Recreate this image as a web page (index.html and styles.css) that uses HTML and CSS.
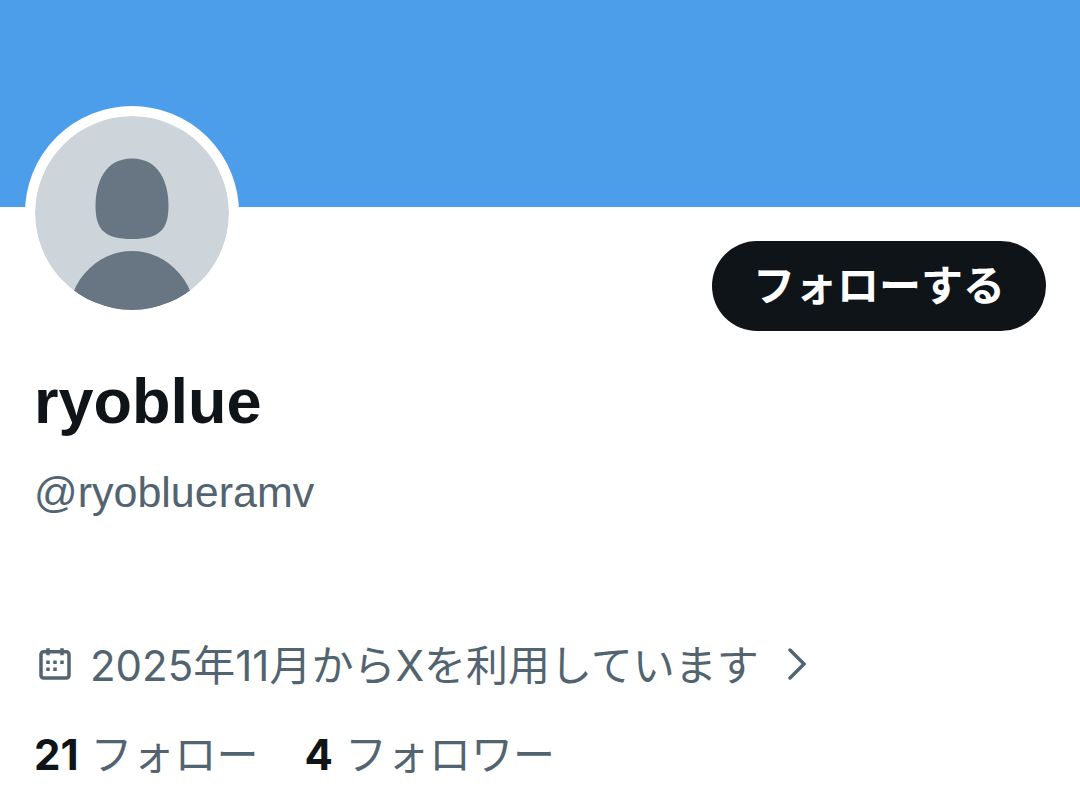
FILE: index.html
```html
<!DOCTYPE html>
<html lang="ja">
<head>
<meta charset="utf-8">
<meta name="viewport" content="width=device-width, initial-scale=1">
<title>ryoblue</title>
<link rel="stylesheet" href="styles.css">
</head>
<body>
<main class="profile">
  <div class="banner"></div>
  <section class="content">
    <div class="top">
      <svg class="avatar" viewBox="0 0 194 194" role="img" aria-label="ryoblue">
        <defs><clipPath id="round"><circle cx="97" cy="97" r="97"/></clipPath></defs>
        <g clip-path="url(#round)">
          <rect width="194" height="194" fill="#cdd5db"/>
          <path fill="#687683" d="M97 42.500C125 42.500 133.500 68 133.500 90C133.500 114 124 123 97 123C70 123 60.500 114 60.500 90C60.500 68 69 42.500 97 42.500Z"/>
          <path fill="#687683" d="M38 177C48 151 72 135 97 135C122 135 146 151 156 177V194H38Z"/>
        </g>
      </svg>
      <button class="follow" type="button">フォローする</button>
    </div>
    <h1 class="name">ryoblue</h1>
    <p class="handle">@ryoblueramv</p>
    <a class="joined" href="#about">
      <svg class="calendar" viewBox="0 0 24 24" aria-hidden="true"><path fill="currentColor" d="M7 4V3h2v1h6V3h2v1h1.500C19.890 4 21 5.120 21 6.500v12c0 1.380-1.110 2.500-2.500 2.500h-13C4.120 21 3 19.880 3 18.500v-12C3 5.120 4.120 4 5.500 4H7zm0 2H5.500c-.270 0-.500.220-.500.500v12c0 .280.230.500.500.500h13c.280 0 .500-.220.500-.500v-12c0-.280-.220-.500-.500-.500H17v1h-2V6H9v1H7V6zm0 6h2v-2H7v2zm0 4h2v-2H7v2zm4-4h2v-2h-2v2zm0 4h2v-2h-2v2zm4-4h2v-2h-2v2z"/></svg>
      <span class="date">2025年11月からXを利用しています</span>
      <svg class="chevron" viewBox="0 0 20 32" aria-hidden="true"><path d="M3 2L17 16L3 30" fill="none" stroke="currentColor" stroke-width="3.500" stroke-linecap="round"/></svg>
    </a>
    <nav class="counts">
      <a class="count" href="#following"><strong>21</strong><span>フォロー</span></a>
      <a class="count" href="#followers"><strong>4</strong><span>フォロワー</span></a>
    </nav>
  </section>
</main>
</body>
</html>
```
FILE: styles.css
```css
* { box-sizing: border-box; }
body {
  margin: 0;
  background: #fff;
  color: #0f1419;
  font-family: Inter, "Noto Sans CJK JP", sans-serif;
  font-size: 42px;
  line-height: 60px;
}
.banner { height: 207px; background: #4c9eeb; }
.content { padding: 0 34px 18px; }
.top {
  display: flex;
  justify-content: space-between;
  align-items: flex-start;
  height: 158px;
}
.avatar {
  position: relative;
  box-sizing: content-box;
  width: 194px;
  height: 194px;
  margin: -101px 0 0 -9px;
  border: 10px solid #fff;
  border-radius: 50%;
  background: #fff;
}
.follow {
  height: 90px;
  margin-top: 34px;
  padding: 0 41px 6px;
  border: 0;
  border-radius: 45px;
  background: #0f1419;
  color: #fff;
  font: bold 42px/60px "Noto Sans CJK JP", sans-serif;
}
.name {
  margin: 0;
  font: bold 63px/72px "Liberation Sans", sans-serif;
}
.handle {
  margin: 25px 0 0;
  color: #536471;
  font: 43px/60px "Liberation Sans", sans-serif;
}
.joined {
  display: flex;
  align-items: center;
  margin-top: 110px;
  color: #536471;
  text-decoration: none;
}
.calendar { width: 42px; height: 42px; margin-right: 14px; }
.date { padding-top: 4px; }
.chevron { width: 20px; height: 32px; margin-left: 28px; }
.counts { display: flex; gap: 46px; margin-top: 29px; }
.count { display: flex; gap: 12px; color: #536471; text-decoration: none; }
.count strong { color: #0f1419; font-weight: 700; }
```
